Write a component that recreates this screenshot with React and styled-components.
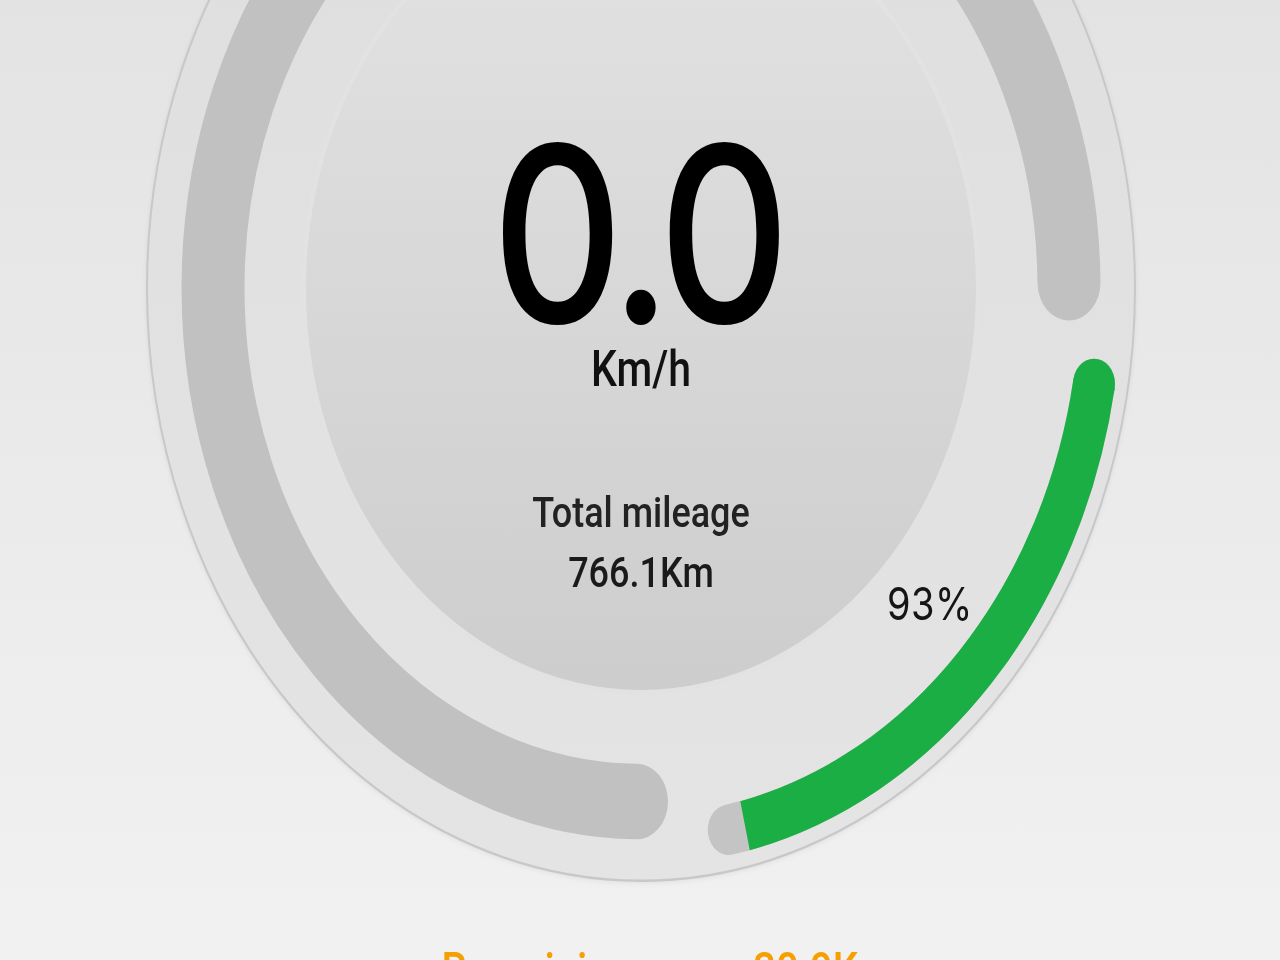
import React from 'react';
import styled, { createGlobalStyle } from 'styled-components';

const GlobalStyle = createGlobalStyle`
    html, body {
        margin: 0;
        height: 960px;
        overflow: hidden;
    }
    body {
        background: linear-gradient(180deg, #e3e3e3 0%, #ececec 60%, #f1f1f1 100%);
        font-family: Roboto, "Liberation Sans", sans-serif;
    }
`;

const C = 496;

const pt = (r, a) => {
    const rad = (a * Math.PI) / 180;
    return [C + r * Math.cos(rad), C + r * Math.sin(rad)];
};

const arc = (r, a1, a2) => {
    const [x1, y1] = pt(r, a1);
    const [x2, y2] = pt(r, a2);
    const large = a2 - a1 > 180 ? 1 : 0;
    return `M${x1} ${y1} A${r} ${r} 0 ${large} 1 ${x2} ${y2}`;
};

const BATTERY = { start: 10, end: 79 };

const DialArt = () => {
    const greenEnd = BATTERY.start + (BATTERY.end - BATTERY.start) * 0.97;
    const [cx, cy] = pt(460, BATTERY.start);

    return (
        <ArtSvg viewBox="0 0 992 992">
            <defs>
                <linearGradient id="rim" x1="0" y1="0" x2="0" y2="1">
                    <stop offset="0" stopColor="#dedede" />
                    <stop offset="1" stopColor="#e4e4e4" />
                </linearGradient>
                <linearGradient id="face" x1="0" y1="0" x2="0" y2="1">
                    <stop offset="0" stopColor="#e3e3e3" />
                    <stop offset="1" stopColor="#cdcdcd" />
                </linearGradient>
            </defs>

            <circle cx={C} cy={C} r="494" fill="url(#rim)" stroke="#c8c8c8" strokeWidth="2" />

            <path d={arc(428, 90.6, 359.4)} fill="none" stroke="#c1c1c1" strokeWidth="63" strokeLinecap="round" />

            <circle cx={C} cy={C} r="339" fill="#e2e2e2" />
            <circle cx={C} cy={C} r="335" fill="url(#face)" />

            <path d={arc(460, BATTERY.start, BATTERY.end)} fill="none" stroke="#c4c4c4" strokeWidth="42" strokeLinecap="round" />
            <path d={arc(460, BATTERY.start, greenEnd)} fill="none" stroke="#1bae44" strokeWidth="42" />
            <circle cx={cx} cy={cy} r="21" fill="#1bae44" />
        </ArtSvg>
    );
};

const App = () => {

    return (
        <>
            <GlobalStyle />
            <Screen>
                <Dial>
                    <DialArt />
                    <Readout>
                        <Speed>0.0</Speed>
                        <Unit>Km/h</Unit>
                        <MileageLabel>Total mileage</MileageLabel>
                        <MileageValue>766.1Km</MileageValue>
                    </Readout>
                    <Battery>93%</Battery>
                </Dial>
                <Remaining>Remaining range 30.9Km</Remaining>
            </Screen>
        </>
    )
}

export default App;

const Screen = styled.div`
    width: 1280px;
    height: 800px;
    overflow: hidden;
    transform: scaleY(1.2);
    transform-origin: top left;
`;

const Dial = styled.div`
    position: relative;
    display: grid;
    width: 992px;
    height: 992px;
    margin: -256px 0 0 145px;

    > * {
        grid-area: 1 / 1;
    }
`;

const ArtSvg = styled.svg`
    width: 992px;
    height: 992px;
    display: block;
    filter: drop-shadow(0 1px 2px rgba(0, 0, 0, 0.06));
`;

const Readout = styled.div`
    position: relative;
    display: flex;
    flex-direction: column;
    align-items: center;
    padding-top: 369px;
    color: #1b1b1b;
    line-height: 1;
`;

const Speed = styled.div`
    font-family: Inter, Roboto, sans-serif;
    font-size: 204px;
    line-height: 0.8;
    font-weight: 500;
    letter-spacing: -8px;
    padding-right: 8px;
    color: #000;
`;

const Unit = styled.div`
    margin-top: 12px;
    font-size: 41px;
    font-weight: 500;
    color: #111;
`;

const MileageLabel = styled.div`
    margin-top: 80px;
    font-size: 36px;
    font-weight: 500;
    color: #222;
`;

const MileageValue = styled.div`
    margin-top: 14px;
    font-size: 36px;
    font-weight: 500;
    color: #1a1a1a;
`;

const Battery = styled.div`
    position: absolute;
    left: 742px;
    top: 740px;
    font-family: Inter, Roboto, sans-serif;
    font-size: 38px;
    line-height: 1;
    letter-spacing: 0.5px;
    color: #151515;
`;

const Remaining = styled.div`
    margin-top: 49px;
    padding-left: 54px;
    text-align: center;
    font-size: 40px;
    line-height: 1.2;
    font-weight: 500;
    color: #f5a000;
`;
